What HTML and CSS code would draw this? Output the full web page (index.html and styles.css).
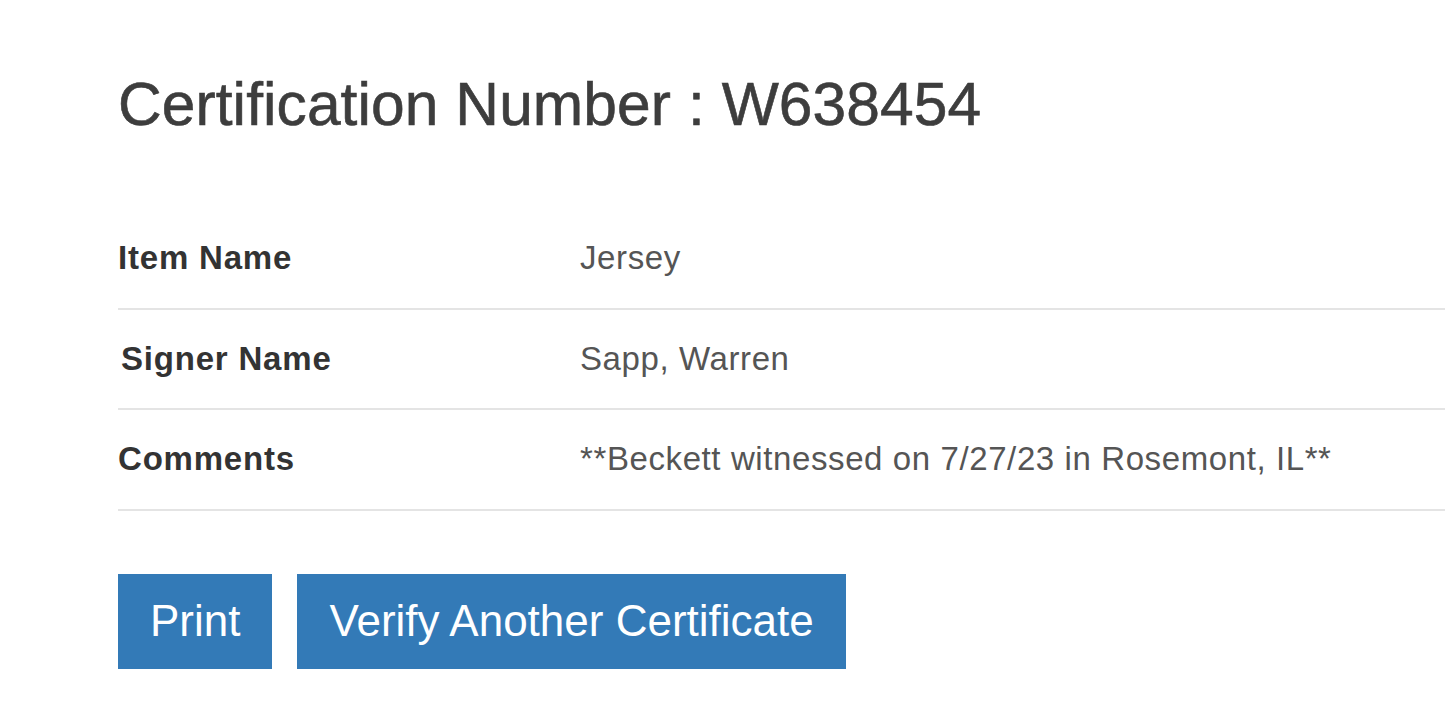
FILE: index.html
```html
<!DOCTYPE html>
<html>
<head>
<meta charset="utf-8">
<link rel="stylesheet" href="styles.css">
</head>
<body>
<main class="page">
  <h1 class="title">Certification Number : W638454</h1>
  <div class="details">
    <div class="row">
      <div class="label">Item Name</div>
      <div class="value">Jersey</div>
    </div>
    <div class="row">
      <div class="label label-shift">Signer Name</div>
      <div class="value">Sapp, Warren</div>
    </div>
    <div class="row">
      <div class="label">Comments</div>
      <div class="value">**Beckett witnessed on 7/27/23 in Rosemont, IL**</div>
    </div>
  </div>
  <div class="actions">
    <button class="btn">Print</button>
    <button class="btn">Verify Another Certificate</button>
  </div>
</main>
</body>
</html>
```

FILE: styles.css
```css
html, body {
  margin: 0;
  padding: 0;
  background: #ffffff;
  overflow: hidden;
}
body {
  font-family: "Liberation Sans", Arial, sans-serif;
  color: #333333;
}
.page {
  padding: 70px 0 0 118px;
}
.title {
  margin: 0;
  font-size: 60.5px;
  font-weight: normal;
  color: #3d3d3d;
  line-height: 68px;
  letter-spacing: 0.08px;
  -webkit-text-stroke: 0.6px #3d3d3d;
}
.details {
  margin-top: 71px;
  width: 1327px;
}
.row {
  display: flex;
  align-items: center;
  height: 98.5px;
  border-bottom: 2px solid #e4e4e4;
}
.label {
  width: 462px;
  font-size: 33px;
  letter-spacing: 0.8px;
  font-weight: bold;
  color: #333333;
}
.label-shift {
  padding-left: 3px;
  width: 459px;
}
.value {
  font-size: 33px;
  letter-spacing: 0.6px;
  color: #555555;
}
.actions {
  display: flex;
  gap: 25px;
  margin-top: 63px;
}
.btn {
  height: 95px;
  padding: 0 32px;
  border: none;
  border-radius: 0;
  background: #337ab7;
  color: #ffffff;
  font-family: "Liberation Sans", Arial, sans-serif;
  font-size: 44px;
}
```
